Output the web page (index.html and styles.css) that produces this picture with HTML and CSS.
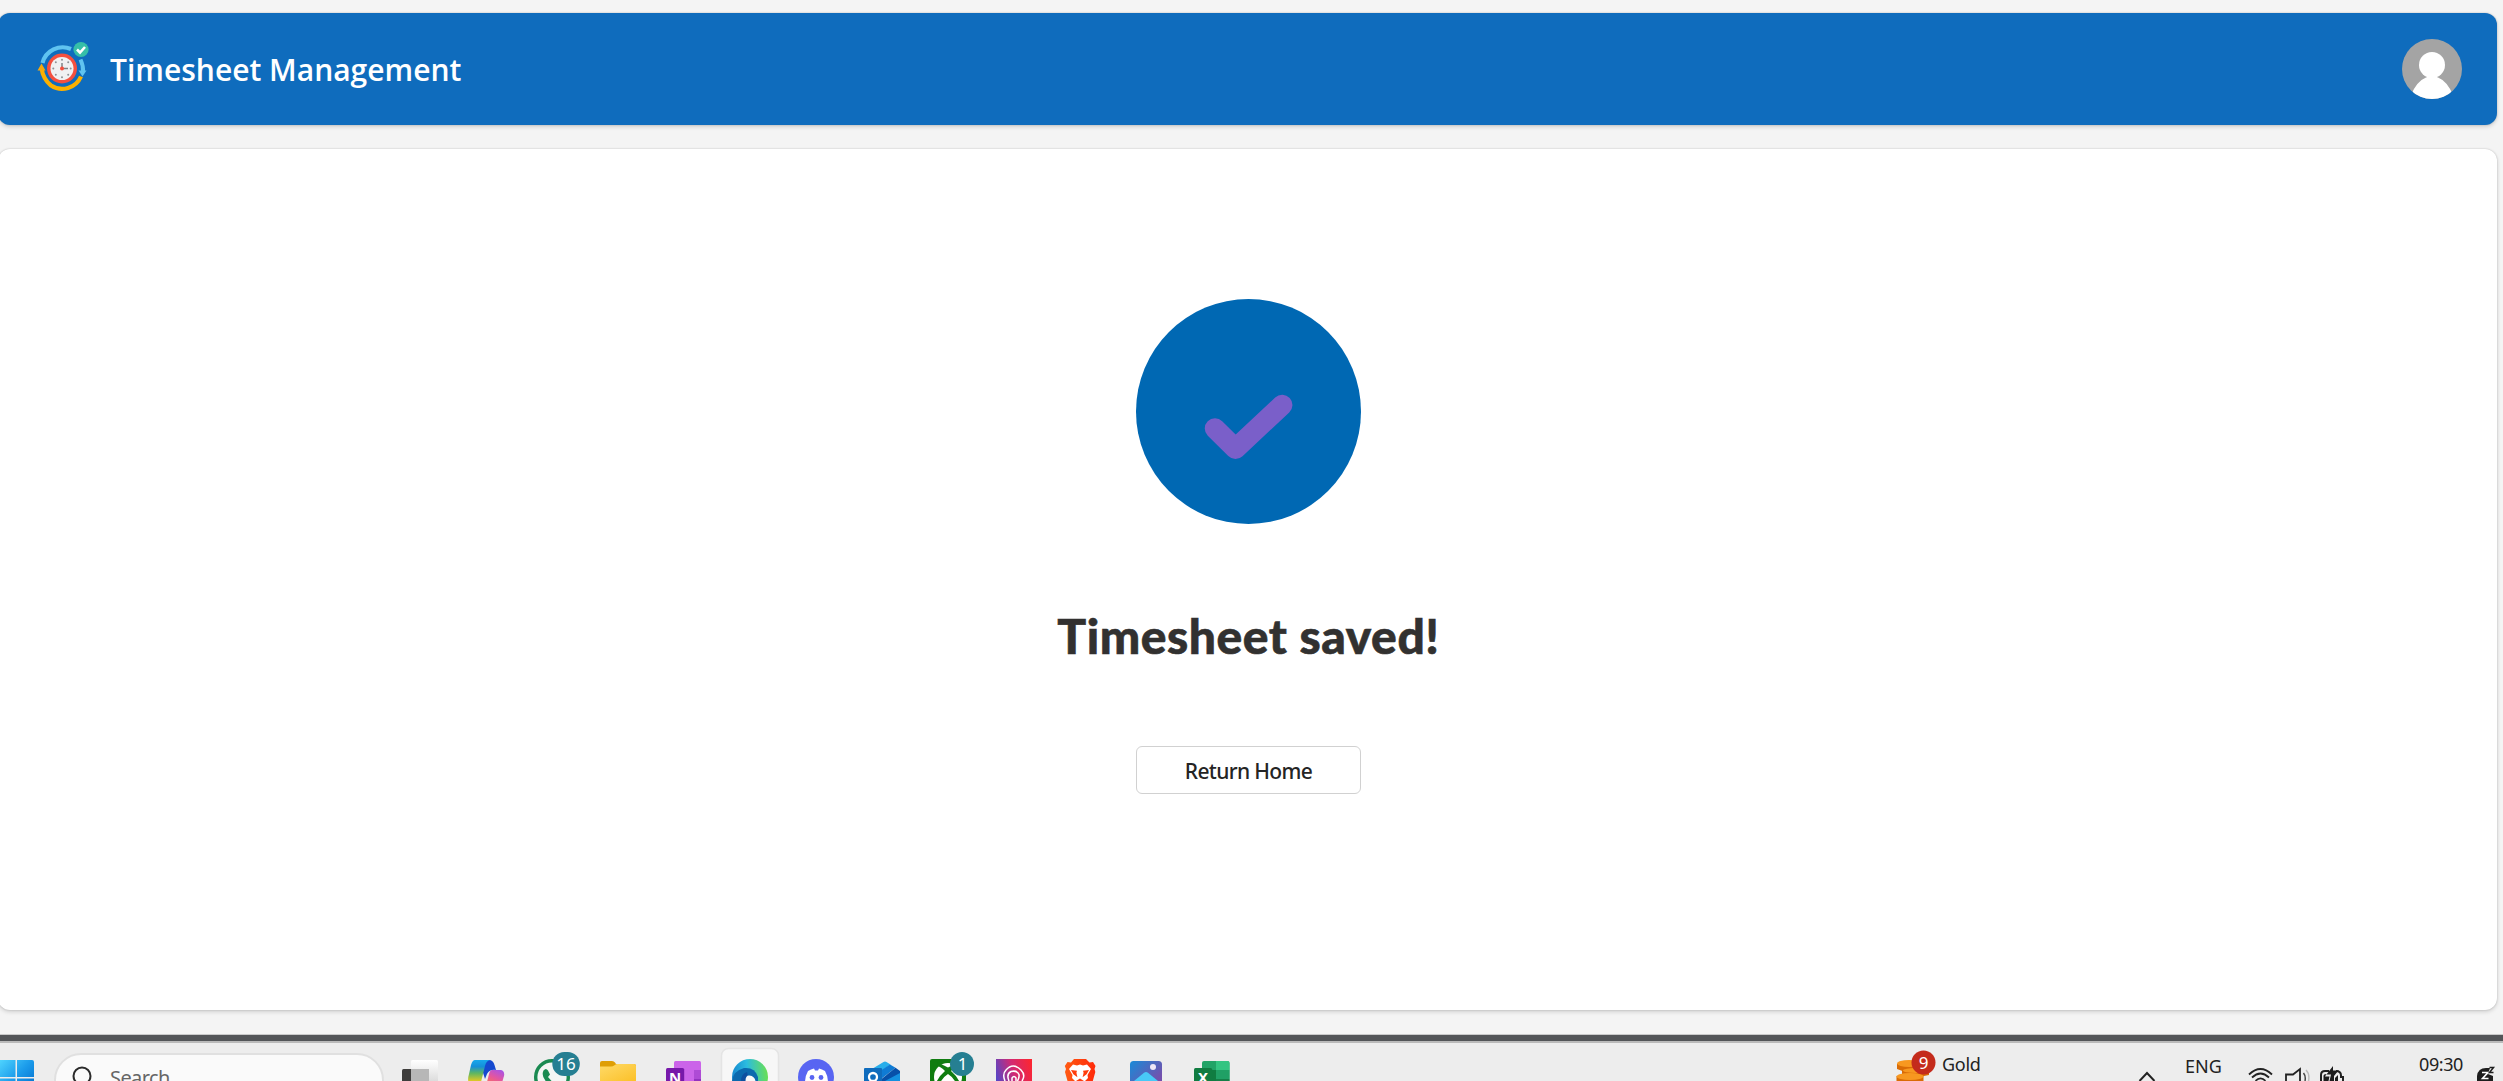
FILE: index.html
```html
<!DOCTYPE html>
<html lang="en">
<head>
<meta charset="utf-8">
<title>Timesheet Management</title>
<link rel="stylesheet" href="styles.css">
</head>
<body>
<div class="app">
  <header class="header">
    <svg class="logo" width="54" height="54" viewBox="0 0 54 54">
      <path d="M5.500 22A21 21 0 0 1 34 8" fill="none" stroke="#5fc3f0" stroke-width="4.200"/>
      <path d="M43.500 18.500Q46.500 25 46 31" fill="none" stroke="#5fc3f0" stroke-width="4"/>
      <path d="M41.500 29.500h8l-4 6z" fill="#5fc3f0"/>
      <path d="M4.500 27Q6 38 14 44.500A20.500 20.500 0 0 0 44 35.500" fill="none" stroke="#fcb000" stroke-width="4.200"/>
      <path d="M.5 29.500h8l-4-7z" fill="#f5a80c"/>
      <circle cx="25" cy="27.500" r="15" fill="#f4503f"/>
      <circle cx="25" cy="27.500" r="11.500" fill="#f0f1f2"/>
      <g fill="#8d9296"><circle cx="25" cy="18.800" r="1"/><circle cx="31.200" cy="21.300" r="1"/><circle cx="33.700" cy="27.500" r="1"/><circle cx="31.200" cy="33.700" r="1"/><circle cx="25" cy="36.200" r="1"/><circle cx="18.800" cy="33.700" r="1"/><circle cx="16.300" cy="27.500" r="1"/><circle cx="18.800" cy="21.300" r="1"/></g>
      <path d="M25 22v5.500h6" fill="none" stroke="#7d8286" stroke-width="1.500"/>
      <circle cx="25" cy="27.500" r="2" fill="#f4503f"/>
      <circle cx="44" cy="8.500" r="7.600" fill="#36bfa8"/>
      <path d="M40 8.500l3 3 5-5.500" fill="none" stroke="#fff" stroke-width="2.600"/>
    </svg>
    <h1 class="title">Timesheet Management</h1>
    <svg class="avatar" width="60" height="60" viewBox="0 0 60 60">
      <clipPath id="face"><circle cx="30" cy="30" r="30"/></clipPath>
      <g clip-path="url(#face)"><path fill="#a4a4a4" d="M0 0h60v60H0z"/><circle cx="30" cy="26" r="13" fill="#fff"/><path fill="#fff" d="M9 56Q15 42 24 38.500Q30 35 36 38.500Q45 42 51 56L40 64H20z"/></g>
    </svg>
  </header>
  <main class="panel">
    <svg class="success" width="225" height="225" viewBox="0 0 225 225">
      <circle cx="112.500" cy="112.500" r="112.500" fill="#0068b3"/>
      <path d="M79 129.500L99.500 149.800L146.200 106" fill="none" stroke="#7a5fc9" stroke-width="20.500" stroke-linecap="round" stroke-linejoin="round"/>
    </svg>
    <h2 class="message">Timesheet saved!</h2>
    <button class="home" type="button"><span class="home-label">Return Home</span></button>
  </main>
</div>
<div class="screen-edge"></div>
<footer class="taskbar">
  <svg class="start" width="54" height="38" viewBox="0 0 54 38">
    <defs><linearGradient id="win" gradientUnits="userSpaceOnUse" x1="-1" y1="17" x2="33" y2="51"><stop offset="0" stop-color="#50d5ff"/><stop offset=".5" stop-color="#1a9aea"/><stop offset="1" stop-color="#0067c8"/></linearGradient></defs>
    <path fill="url(#win)" d="M-1 17H15.500V34H-1zM17 17H32a2 2 0 0 1 2 2V34H17zM-1 35.500H15.500V52H-1zM17 35.500H34V52H17z"/>
  </svg>
  <div class="search">
    <svg width="24" height="26" viewBox="0 0 24 26"><g fill="none" stroke="#2b2b2b" stroke-width="2"><circle cx="11" cy="10" r="8.500"/><path d="M16.500 16.500l6 6"/></g></svg>
    <span class="search-text">Search</span>
  </div>
  <nav class="apps">
    <svg class="slot" viewBox="0 0 66 38">
      <defs><linearGradient id="tv" x1="0" y1="0" x2="0" y2="1"><stop offset="0" stop-color="#fff"/><stop offset="1" stop-color="#d2d2d2"/></linearGradient></defs>
      <rect x="15" y="26" width="27" height="26" rx="1.500" fill="#3e3d3c"/><rect x="24" y="17" width="27" height="27" rx="1.500" fill="url(#tv)"/><path fill="#b7b7b7" d="M24 26h18v12H24z"/>
    </svg>
    <svg class="slot" viewBox="0 0 66 38">
      <defs>
        <linearGradient id="cp" x1="0" y1="0" x2="0" y2="1"><stop offset="0" stop-color="#18a8ec"/><stop offset=".3" stop-color="#158fd8"/><stop offset=".6" stop-color="#5eb662"/><stop offset="1" stop-color="#f0cb1c"/></linearGradient>
        <linearGradient id="cq" x1=".8" y1="0" x2=".3" y2="1"><stop offset="0" stop-color="#a853e6"/><stop offset=".5" stop-color="#e4569f"/><stop offset="1" stop-color="#fb7358"/></linearGradient>
      </defs>
      <path fill="#1549cf" d="M26 17h10q4 0 5.500 5l1.500 5q-6-1-9 4l-2 5z"/>
      <path fill="url(#cp)" d="M22 17h15q-4 1-5 6l-4 16H15.500q-1-3 .5-8l2-9q1.500-5 4-5z"/>
      <path fill="url(#cq)" d="M39 27h9q4 1 3 6l-3 10H33l3-12q1-4 3-4z"/>
    </svg>
    <svg class="slot" viewBox="0 0 66 38">
      <circle cx="33" cy="34" r="16.300" fill="#f3f6f4" stroke="#1a8a51" stroke-width="3.400"/>
      <path fill="#1a8a51" d="M24.500 27.500q2.500-3 4.500 0l2 4-2 2.500 4 4.500H27q-5-6-2.500-11z"/>
      <rect x="33.300" y="9" width="27.500" height="24" rx="12" fill="#267f92"/>
      <text class="badge" x="47" y="27">16</text>
    </svg>
    <svg class="slot" viewBox="0 0 66 38">
      <defs><linearGradient id="fo" x1="0" y1="0" x2=".7" y2="1"><stop offset="0" stop-color="#ffda68"/><stop offset="1" stop-color="#fbbf25"/></linearGradient></defs>
      <path fill="#df9e05" d="M15 34V20q0-2 2-2h10q2 0 3 1.500l1 1.500h18q2 0 2 2z"/>
      <path fill="url(#fo)" d="M15 23.500h11q2 0 3.500-1.300 1.500-1.200 3-1.200H49q2 0 2 2v22H15z"/>
    </svg>
    <svg class="slot" viewBox="0 0 66 38">
      <path fill="#cb64e9" d="M23 38V19.500q0-1.500 1.500-1.500h24q1.500 0 1.500 1.500V38z"/>
      <path fill="#ae4bd5" d="M43 27h7v11h-7z"/><path fill="#9332bf" d="M43 36h7v2h-7z"/>
      <path fill="#7719aa" d="M15 26.500q0-1.500 1.500-1.500h15q1.700 0 1.700 1.500V42H15z"/>
      <text class="letter" x="24" y="40">N</text>
    </svg>
    <svg class="slot" viewBox="0 0 66 38">
      <defs><linearGradient id="ea" x1="0" y1=".6" x2="1" y2=".5"><stop offset="0" stop-color="#1586cf"/><stop offset=".45" stop-color="#2bbce0"/><stop offset="1" stop-color="#69df55"/></linearGradient></defs>
      <rect x="4.500" y="5.500" width="57" height="56" rx="7" fill="#f7f7f7" stroke="#e4e4e4" stroke-width="1.500"/>
      <circle cx="33" cy="34" r="18" fill="url(#ea)"/>
      <path fill="#0b69ae" d="M15 38q1-10 12-13 11-1 14 9v4z"/><path fill="#0d4f9f" d="M24 38q0-7 6-9l2 9z"/>
      <path fill="#f7f7f7" d="M28.500 38q0-6 4-5.500 5 .5 6 5.500z"/>
    </svg>
    <svg class="slot" viewBox="0 0 66 38">
      <circle cx="33" cy="34" r="18" fill="#5865f2"/>
      <path fill="#fff" d="M22 40q0-7 3-12 3-2 6-2.500l1 2h3l1-2q3 .5 6 2.500 3 5 3 12z"/><circle cx="29" cy="34.500" r="2.400" fill="#5865f2"/><circle cx="38" cy="34.500" r="2.400" fill="#5865f2"/>
    </svg>
    <svg class="slot" viewBox="0 0 66 38">
      <path fill="#28aeea" d="M18 29L34.500 19q1.500-1 3 0l4 2.500L24 34z"/><path fill="#0f7bd4" d="M22 34l19-12.500 5.500 3.300L27 40z"/><path fill="#0750a8" d="M30 38l16.500-13.200L51 28v10z"/><path fill="#1490df" d="M36 38l15-8v8z"/>
      <rect x="15" y="25" width="18" height="22" rx="1" fill="#0f6cbd"/>
      <circle cx="24" cy="34" r="4" fill="none" stroke="#fff" stroke-width="2.300"/>
    </svg>
    <svg class="slot" viewBox="0 0 66 38">
      <rect x="15" y="16" width="36" height="36" rx="2" fill="#107c10"/>
      <circle cx="33" cy="34" r="14" fill="#fff"/><path fill="#107c10" d="M23 19.500l10 5 10-5 2 3q-5 1-9 5.500 6 5 9 12h-4q-3-6-8-9-5 3-8 9h-4q3-7 9-12-4-4.500-9-5.500z"/>
      <circle cx="47" cy="21" r="12" fill="#267f92"/><text class="badge" x="47.500" y="27">1</text>
    </svg>
    <svg class="slot" viewBox="0 0 66 38">
      <defs><linearGradient id="pr" x1="0" y1=".5" x2="1" y2=".2"><stop offset="0" stop-color="#5745c6"/><stop offset=".5" stop-color="#d32972"/><stop offset="1" stop-color="#fb2632"/></linearGradient></defs>
      <path fill="url(#pr)" d="M15 16h36v36H15z"/>
      <g fill="none" stroke="#fff" stroke-width="1.500"><path d="M24 38q-3-7 1-11 7-8 15 0 5 5 1 11"/><path d="M28 38q-3-7 2-9.500 6-1.500 8 3 .5 3-1.500 6.500"/><path d="M31 38v-3q2-3 4 0v3"/></g>
    </svg>
    <svg class="slot" viewBox="0 0 66 38">
      <defs><linearGradient id="br"><stop offset="0" stop-color="#ff5a12"/><stop offset="1" stop-color="#ff2a0a"/></linearGradient></defs>
      <path fill="url(#br)" d="M27 16h12l3.500 3.500 3.500-.5 2.500 4-1 3 .8 3-2.500 9H20.500L18 29l1-3-1.200-3 2.700-4 3.500.5z"/>
      <path fill="#fff" d="M22 26l4-4.500 4 1 3-1 3 1 4-1 4 4.500-3.500 6 .5 3-3 3H28l-3-3 .5-3z"/>
      <path fill="#ff3d0c" d="M24 27l6 .8-.6 2 1 4.500-4-3zM42 27l-6 .8.6 2-1 4.500 4-3zM29 38l4-2.500 4 2.500z"/>
    </svg>
    <svg class="slot" viewBox="0 0 66 38">
      <defs><linearGradient id="ph" x1="0" y1="0" x2=".7" y2=".7"><stop offset="0" stop-color="#188bd8"/><stop offset="1" stop-color="#7450ad"/></linearGradient></defs>
      <rect x="17" y="18" width="32" height="36" rx="3.500" fill="url(#ph)"/><circle cx="40" cy="24" r="3" fill="#eee7f7"/>
      <path fill="#48c9f7" d="M21 38l10-8.300q2-1.600 4 0L45 38z"/>
    </svg>
    <svg class="slot" viewBox="0 0 66 38">
      <rect x="23" y="18" width="27.500" height="36" rx="2" fill="#21a366"/><path fill="#33c481" d="M37 18h11.500q2 0 2 2v7H37z"/><path fill="#107c41" d="M23 27h14v11H23z"/><path fill="#20a065" d="M37 27h13.500v9H37z"/><path fill="#157f48" d="M37 36h13.500v2H37z"/>
      <path fill="#107c41" d="M15 26.500q0-1.500 1.500-1.500h15q1.700 0 1.700 1.500V42H15z"/>
      <text class="letter" x="24" y="39.500">X</text>
    </svg>
  </nav>
  <div class="tray">
    <svg class="coins" width="50" height="38" viewBox="0 0 50 38">
      <path fill="#d96b06" d="M6 21v5q12 6 25 0v-5zM11 27v5q12 4 27 0v-5zM5.500 33v5h27v-5z"/>
      <g fill="#f79820"><ellipse cx="18" cy="20.500" rx="12" ry="3.500"/><ellipse cx="25" cy="27.500" rx="13" ry="2.500"/><ellipse cx="19" cy="33.500" rx="13.500" ry="3.500"/></g>
      <circle cx="32.500" cy="19.500" r="12" fill="#c42b1c"/><text class="badge" x="32.500" y="25.500">9</text>
    </svg>
    <span class="gold">Gold</span>
    <svg class="caret" width="18" height="38" viewBox="0 0 18 38"><path d="M1.500 38L9 30l7.500 8" fill="none" stroke="#222" stroke-width="2"/></svg>
    <span class="lang">ENG</span>
    <svg class="status" width="100" height="38" viewBox="0 0 100 38">
      <g fill="none" stroke="#222" stroke-width="1.800"><path d="M2 31.500Q13.500 20.500 25 31.500M5 34.500q8.500-8 17 0M8.500 37.800q5-5 10 0"/><path d="M53 38V26l-7 5.500h-7V38"/></g>
      <path d="M56.500 30q2.500 3 1.500 8" fill="none" stroke="#444" stroke-width="1.500"/><path d="M59 27q4 4 2.500 11" fill="none" stroke="#bbb" stroke-width="1.500"/>
      <path d="M82 28h-4q-4 0-4 4v6M89 28q5 0 5 4.500v1.500h2v4" fill="none" stroke="#222" stroke-width="2"/>
      <path fill="#1d1d1d" d="M76.500 38v-5q0-2 3-2l-1.500 2.500h4.500L81.500 38zM86 23l-6.500 8.500H84L82.500 38H87V33l4.500-5.500H86zM88 35v3h3v-6z"/>
    </svg>
    <span class="clock">09:30</span>
    <svg class="bell" width="26" height="38" viewBox="0 0 26 38">
      <path fill="#1d1d1d" d="M1 38v-5q1-8 9-8h4l-2 6 5 2v5z"/>
      <path d="M6 29.500h6l-5.500 6h6" fill="none" stroke="#fff" stroke-width="1.600"/><path d="M13.500 24.500h4l-4 5h4" fill="none" stroke="#1d1d1d" stroke-width="1.500"/>
    </svg>
  </div>
</footer>
</body>
</html>
```
FILE: styles.css
```css
* {
  box-sizing: border-box;
}

html,
body {
  margin: 0;
  height: 1081px;
  overflow: hidden;
}

body {
  display: flex;
  flex-direction: column;
  background: #f4f4f4;
  font-family: "Open Sans", sans-serif;
}

svg {
  display: block;
  flex: none;
}

.app {
  display: flex;
  flex-direction: column;
  gap: 24px;
  height: 1034px;
  flex: none;
  margin: 0 6px 0 -2px;
  padding: 13px 0 24px;
}

.header {
  display: flex;
  align-items: center;
  height: 112px;
  flex: none;
  padding: 0 35px 0 39px;
  border-radius: 12px;
  background: #0f6cbd;
  box-shadow: 0 0 2px rgba(0, 0, 0, .2), 0 2px 4px rgba(0, 0, 0, .14);
}

.logo {
  margin-bottom: 2px;
}

.title {
  flex: 1;
  margin: 2px 0 0 19px;
  color: #fff;
  font-size: 30px;
  font-weight: 600;
  line-height: 40px;
}

.panel {
  flex: 1;
  display: flex;
  flex-direction: column;
  align-items: center;
  padding: 150px 0 0 2px;
  border-radius: 12px;
  background: #fff;
  box-shadow: 0 0 2px rgba(0, 0, 0, .2), 0 2px 4px rgba(0, 0, 0, .14);
}

.message {
  margin: 82px 0 0;
  color: #323130;
  font-family: Lato, sans-serif;
  font-size: 48px;
  font-weight: 900;
  line-height: 60px;
  letter-spacing: .55px;
  -webkit-text-stroke: .6px #323130;
}

.home {
  width: 225px;
  height: 48px;
  margin-top: 80px;
  padding: 0;
  border: 1px solid #d1d1d1;
  border-radius: 6px;
  background: #fff;
  color: #242424;
  font-family: "Noto Sans", sans-serif;
  font-size: 21px;
  font-weight: 500;
  letter-spacing: -.65px;
}

.home-label {
  display: block;
  padding-top: 2px;
}

.screen-edge {
  height: 9px;
  flex: none;
  border-top: 1px solid #c9c9c9;
  border-bottom: 2px solid #bababa;
  background: #535558;
}

.taskbar {
  display: flex;
  height: 38px;
  flex: none;
  overflow: hidden;
  background: #ededed;
  color: #222;
  font-family: "Noto Sans", sans-serif;
  font-size: 18px;
}

.search {
  display: flex;
  align-items: flex-start;
  gap: 15px;
  width: 330px;
  height: 54px;
  flex: none;
  margin-top: 10px;
  padding: 11px 0 0 15px;
  border: 2px solid #e0e0e0;
  border-radius: 27px;
  background: #fafafa;
}

.search-text {
  margin-top: -1px;
  color: #666;
  font-size: 20px;
  line-height: 26px;
  letter-spacing: -.6px;
}

.apps {
  display: flex;
  margin-left: 3px;
}

.slot {
  width: 66px;
  height: 38px;
}

.badge {
  fill: #fff;
  font: 17px "Noto Sans", sans-serif;
  text-anchor: middle;
}

.letter {
  fill: #fff;
  font: bold 15px "Noto Sans", sans-serif;
  text-anchor: middle;
}

.tray {
  display: flex;
  flex: 1;
  margin-left: 646px;
  line-height: 24px;
}

.gold {
  width: 197px;
  margin-top: 9px;
  padding-left: 1px;
  letter-spacing: -.3px;
}

.lang {
  width: 62px;
  margin: 11px 0 0 29px;
}

.clock {
  width: 57px;
  margin: 9px 0 0 72px;
  letter-spacing: -.4px;
}
```
